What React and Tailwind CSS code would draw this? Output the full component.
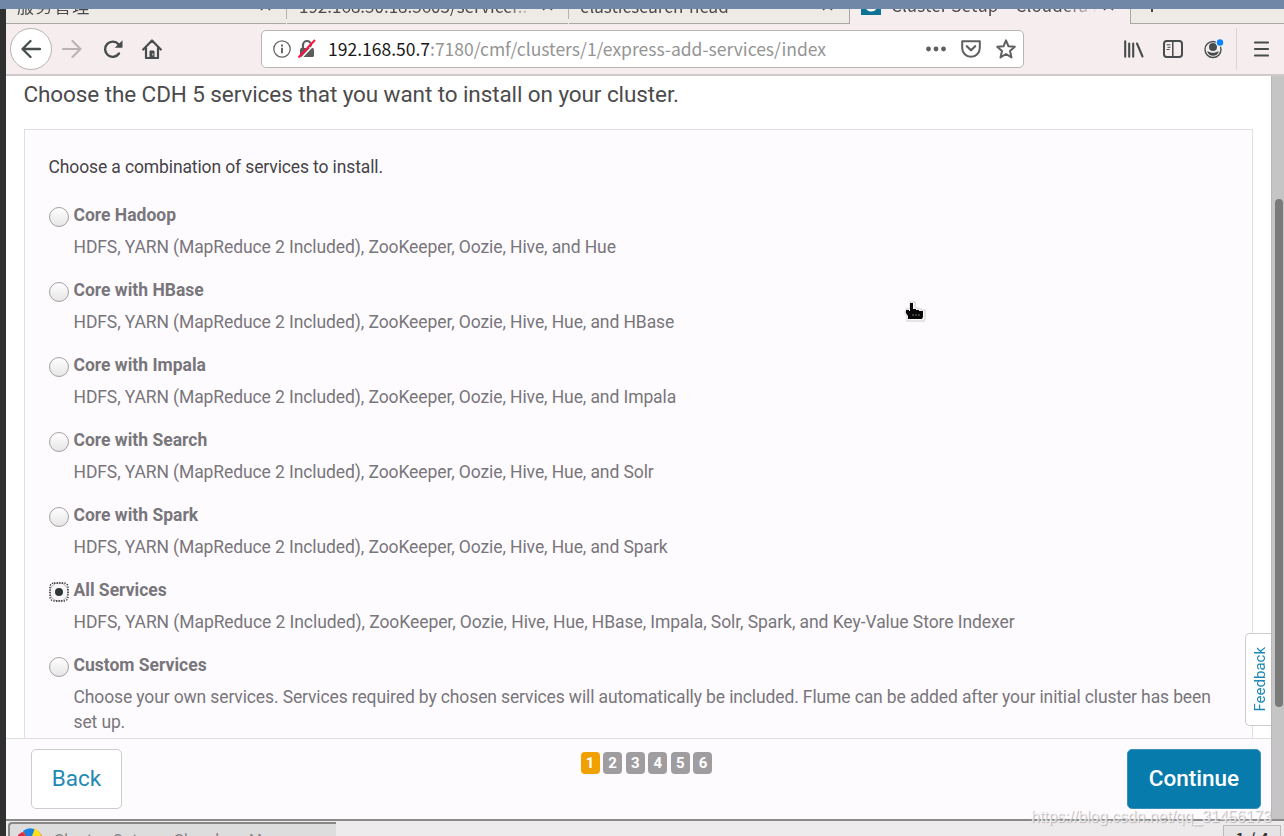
import React from 'react';

const services = [
  { name: 'Core Hadoop', text: 'HDFS, YARN (MapReduce 2 Included), ZooKeeper, Oozie, Hive, and Hue' },
  { name: 'Core with HBase', text: 'HDFS, YARN (MapReduce 2 Included), ZooKeeper, Oozie, Hive, Hue, and HBase' },
  { name: 'Core with Impala', text: 'HDFS, YARN (MapReduce 2 Included), ZooKeeper, Oozie, Hive, Hue, and Impala' },
  { name: 'Core with Search', text: 'HDFS, YARN (MapReduce 2 Included), ZooKeeper, Oozie, Hive, Hue, and Solr' },
  { name: 'Core with Spark', text: 'HDFS, YARN (MapReduce 2 Included), ZooKeeper, Oozie, Hive, Hue, and Spark' },
  {
    name: 'All Services',
    text: 'HDFS, YARN (MapReduce 2 Included), ZooKeeper, Oozie, Hive, Hue, HBase, Impala, Solr, Spark, and Key-Value Store Indexer',
    checked: true,
    tracking: 'tracking-[-0.068px]',
  },
  {
    name: 'Custom Services',
    text: 'Choose your own services. Services required by chosen services will automatically be included. Flume can be added after your initial cluster has been set up.',
    tracking: 'tracking-[-0.125px]',
  },
];

function CloseIcon() {
  return (
    <svg className="w-[11px] h-[11px] shrink-0" viewBox="0 0 11 11" stroke="#555" strokeWidth="1.7">
      <path d="M1 1l9 9M10 1l-9 9" />
    </svg>
  );
}

function Divider() {
  return <div className="w-px h-[10px] self-start shrink-0 bg-[#b5b2af]" />;
}

function Tab({ title, className }) {
  return (
    <div className={`h-full flex items-end bg-[#eeebe6] border-b border-[#a9a6a3] overflow-hidden ${className}`}>
      <span className="flex-1 whitespace-nowrap overflow-hidden leading-[24px] mb-[5px] mask-[linear-gradient(to_right,#000_88%,transparent)]">
        {title}
      </span>
      <div className="mb-[12px] ml-2 h-[11px]">
        <CloseIcon />
      </div>
    </div>
  );
}

function TabStrip() {
  return (
    <div className="flex h-[15px] overflow-hidden text-[17px] text-[#4a4a4a] bg-[#eeebe6]">
      <Tab title="服务管理" className="w-[280px] pl-[11px] pr-[15px] tracking-[1.4px]" />
      <Divider />
      <Tab title="192.168.50.18:5603/servicer.." className="w-[281px] pl-[12px] pr-[15px]" />
      <Divider />
      <Tab title="elasticsearch-head" className="w-[281px] pl-[11px] pr-[16px] border-r" />
      <div className="w-[280px] h-full flex items-end bg-[#f6edee] pl-[11px] pr-[16px]">
        <svg className="w-5 h-5 shrink-0 mb-[9.5px]" viewBox="0 0 20 20">
          <rect width="20" height="20" fill="#0d7394" />
          <path d="M14 6.5a5 5 0 1 0 0 7" fill="none" stroke="#fff" strokeWidth="3.2" />
        </svg>
        <span className="flex-1 ml-[10px] whitespace-nowrap overflow-hidden leading-[24px] mb-[7px] tracking-[0.1px] mask-[linear-gradient(to_right,#000_82%,transparent)]">
          Cluster Setup – Cloudera M
        </span>
        <div className="mb-[13px] ml-1 h-[11px]">
          <CloseIcon />
        </div>
      </div>
      <div className="flex-1 h-full flex items-end border-l border-b border-[#a9a6a3] pl-[13px]">
        <svg className="w-4 h-4 mb-[11px]" viewBox="0 0 16 16" stroke="#444" strokeWidth="2">
          <path d="M8 0v16M0 8h16" />
        </svg>
      </div>
    </div>
  );
}

function Toolbar() {
  return (
    <div className="flex items-center h-[52px] bg-[#f6edee] border-b-2 border-[#cfc9ca]">
      <div className="ml-[4px] w-[42px] h-[42px] rounded-full bg-white border border-[#b9b3b4] flex items-center justify-center shrink-0">
        <svg className="w-5 h-5" viewBox="0 0 20 20" fill="none" stroke="#474d4d" strokeWidth="2.3" strokeLinecap="round" strokeLinejoin="round">
          <path d="M19 10H1.5M9.5 2l-8 8 8 8" />
        </svg>
      </div>
      <svg className="ml-[10px] w-5 h-5" viewBox="0 0 20 20" fill="none" stroke="#b9b3b5" strokeWidth="2.1" strokeLinecap="round" strokeLinejoin="round">
        <path d="M1 10h17.5M10.5 2l8 8-8 8" />
      </svg>
      <svg className="ml-[21px] w-[20px] h-5" viewBox="0 0 20 20" fill="none" stroke="#474d4d" strokeWidth="2.4" strokeLinecap="round">
        <path d="M16 14.500A7.600 7.600 0 1 1 15.500 5.300" />
        <path d="M19.500 1.200v7.600h-7.800z" fill="#474d4d" stroke="none" />
      </svg>
      <svg className="ml-[19px] w-5 h-5" viewBox="0 0 20 20" fill="none" stroke="#474d4d" strokeWidth="2.2" strokeLinejoin="round" strokeLinecap="round">
        <path d="M1.2 10.5L10 1.5l8.8 9M4 9v10h12V9" />
        <path d="M8 19v-7h4v7z" fill="#474d4d" strokeWidth="1" />
        <path d="M10.8 15v1" stroke="#f6edee" strokeWidth="1" />
      </svg>
      <div className="ml-[99px] w-[763px] h-[38px] bg-white rounded-[5px] border border-[#b9b4b5] flex items-center">
        <svg className="ml-[11px] w-[18px] h-[18px]" viewBox="0 0 18 18" fill="none" stroke="#666" strokeWidth="1.3">
          <circle cx="9" cy="9" r="8.2" />
          <path d="M9 7.8v5.4M9 4.4v2" strokeWidth="2" />
        </svg>
        <svg className="ml-[7px] w-[18px] h-5" viewBox="0 0 18 20" fill="none">
          <rect x="2" y="9" width="14" height="9" rx="1.5" fill="#5c5c5c" />
          <path d="M5 10V6a4 4 0 0 1 8 0v4" stroke="#5c5c5c" strokeWidth="2.2" />
          <path d="M2.5 20L18.5 3" stroke="#fff" strokeWidth="1.5" />
          <path d="M0.5 18.5L17 1" stroke="#ff1340" strokeWidth="2" />
        </svg>
        <span className="ml-[12px] flex-1 text-[17.5px] whitespace-nowrap leading-none text-[#949494]">
          <span className="text-[#1a1a1a]">192.168.50.7</span>:7180/cmf/clusters/1/express-add-services/index
        </span>
        <svg className="w-5 h-[6px]" viewBox="0 0 20 6" fill="#5f5f5f">
          <circle cx="2.5" cy="3" r="2.4" />
          <circle cx="10" cy="3" r="2.4" />
          <circle cx="17.5" cy="3" r="2.4" />
        </svg>
        <svg className="ml-[15px] w-5 h-[18px]" viewBox="0 0 20 18" fill="none" stroke="#5f5f5f" strokeWidth="2" strokeLinecap="round" strokeLinejoin="round">
          <path d="M1.2 1.2h17.6V8a8.8 8.8 0 0 1-17.6 0z" />
          <path d="M5.8 6.2L10 10.3l4.2-4.1" strokeWidth="2.3" />
        </svg>
        <svg className="ml-[15px] mr-[7px] w-5 h-5" viewBox="0 0 20 20" fill="none" stroke="#5f5f5f" strokeWidth="2" strokeLinejoin="round">
          <path d="M10 1.4l2.5 5.9 6.3.5-4.8 4.2 1.500 6.400-5.500-3.400-5.500 3.400L6 12 1.200 7.800l6.300-.5z" />
        </svg>
      </div>
      <svg className="ml-[100px] w-5 h-[18px]" viewBox="0 0 20 18" stroke="#474d4d" strokeWidth="2.1" strokeLinecap="round" fill="none">
        <path d="M1.2 1.2v15.6M5.2 3.5v13.3M9.2 3.5v13.3M13 3.5l5.5 13" />
      </svg>
      <svg className="ml-[19px] w-5 h-[18px]" viewBox="0 0 20 18" stroke="#474d4d" strokeWidth="2" fill="none">
        <rect x="1" y="1" width="18" height="16" rx="2.8" />
        <path d="M9.8 1v16" strokeWidth="1.5" />
        <path d="M3.5 4.8h4M4.5 7.3h3M3.5 9.5h3" strokeWidth="1" />
      </svg>
      <svg className="ml-[21px] w-5 h-5" viewBox="0 0 20 20" fill="none">
        <circle cx="9" cy="10.5" r="8" stroke="#474d4d" strokeWidth="1.4" />
        <circle cx="9" cy="8" r="4" fill="#474d4d" />
        <path d="M3.2 12.2c1.6 0 2.4 1.6 5.8 1.6s4.200-1.600 5.800-1.600c-.8 3-3 4.600-5.800 4.600s-5-1.600-5.800-4.600z" fill="#474d4d" />
        <circle cx="16" cy="3.5" r="4.300" fill="#f6edee" />
        <circle cx="16" cy="3.5" r="3.2" fill="#0a84ff" />
      </svg>
      <div className="ml-[12px] w-px h-[42px] bg-[#dcd3d5]" />
      <svg className="ml-[17px] w-[15px] h-4" viewBox="0 0 15 16" stroke="#474d4d" strokeWidth="2.2" strokeLinecap="round">
        <path d="M1 1.5h13M1 8h13M1 14.5h13" />
      </svg>
    </div>
  );
}

function Radio({ checked }) {
  if (checked) {
    return (
      <svg className="mt-[8px] w-5 h-5 shrink-0" viewBox="0 0 20 20">
        <circle cx="10" cy="10" r="9.2" fill="#f7f5f6" stroke="#aaa6a8" />
        <rect x="1" y="1" width="18" height="18" rx="4" fill="none" stroke="#222" strokeWidth="1.3" strokeDasharray="1.3 1.3" />
        <circle cx="10" cy="10" r="4" fill="#2c3837" />
      </svg>
    );
  }
  return (
    <div className="mt-[8px] w-5 h-5 shrink-0 rounded-full border-[1.5px] border-[#a3a09f] bg-linear-to-b from-white via-[#f3f2f2] to-[#e6e6e6]" />
  );
}

function ServiceOption({ service }) {
  return (
    <div className="flex h-[75px]">
      <Radio checked={service.checked} />
      <div className="ml-[5px] text-[17.5px] leading-[25px] text-[#78767a]">
        <div className="font-bold mt-[4px]">{service.name}</div>
        <div className={`mt-[7px] ${service.tracking || 'tracking-[-0.09px]'}`}>{service.text}</div>
      </div>
    </div>
  );
}

function Cursor() {
  return (
    <svg className="absolute left-[898px] top-[224px] w-[22px] h-[24px]" viewBox="0 0 22 24">
      <path d="M6 2h5v6h3v1h3v1h4v8l-1 3H3v-4L1 12l2-3h3z" fill="#fff" stroke="#dedbdf" strokeWidth="1.5" />
      <path d="M6 3h3v6h3v1h3v1h4v6l-1 2H4v-3l-2-3v-3h3v1h1z" fill="#090909" />
      <path d="M8 15h9" stroke="#777" strokeDasharray="2 1" />
    </svg>
  );
}

function Page() {
  return (
    <div className="relative flex flex-1 min-h-0 font-['Roboto',sans-serif]">
      <div className="relative flex flex-col flex-1 bg-white">
        <div className="flex-1 min-h-0 overflow-hidden pl-[17.5px] pr-[18px]">
          <h1 className="text-[22.5px] leading-[36px] tracking-[-0.09px] text-[#4b4b4d]">
            Choose the CDH 5 services that you want to install on your cluster.
          </h1>
          <div className="mt-[17px] h-[700px] bg-[#fefbff] border border-[#e0e0e2] pl-[24px] pr-[36px]">
            <p className="mt-[25px] mb-[7px] text-[17.5px] leading-[25px] tracking-[-0.12px] text-[#454347]">
              Choose a combination of services to install.
            </p>
            <div className="pt-[12px]">
              {services.map((service) => (
                <ServiceOption key={service.name} service={service} />
              ))}
            </div>
          </div>
        </div>
        <div className="relative h-[81px] shrink-0 bg-[#fefbff] border-t border-[#dfdfe1] flex items-start justify-between pl-[25px] pr-[10px]">
          <button className="mt-[10px] w-[91px] h-[60px] rounded-[5px] bg-white border border-[#ccc] text-[22.5px] text-[#1f89b5]">
            Back
          </button>
          <div className="flex gap-[3.6px] mt-[13px] ml-[44px]">
            {[1, 2, 3, 4, 5, 6].map((step) => (
              <span
                key={step}
                className={`w-[19px] h-[22px] rounded-[4px] text-center text-[15px] leading-[22px] font-bold text-white ${
                  step === 1 ? 'bg-[#f0a000]' : 'bg-[#a09da1]'
                }`}
              >
                {step}
              </span>
            ))}
          </div>
          <button className="mt-[10px] w-[134px] h-[60px] rounded-[5px] bg-[#087bad] border border-[#3a8fb8] text-[22.5px] font-medium text-white">
            Continue
          </button>
        </div>
        <div className="absolute right-0 top-[557px] w-[26px] h-[93px] rounded-l-[5px] bg-white border border-r-0 border-[#ccc] flex items-center justify-center pl-[3px]">
          <span className="[writing-mode:vertical-rl] rotate-180 text-[15px] leading-none text-[#1f89b5]">Feedback</span>
        </div>
        <Cursor />
      </div>
      <div className="w-[13px] bg-[#c5c5c5] border-l border-[#b8b8b8]">
        <div className="mt-[123px] ml-[3px] w-[8px] h-[508px] rounded-full bg-[#7a7a79]" />
      </div>
    </div>
  );
}

function Taskbar() {
  return (
    <div className="flex h-[17px] shrink-0 overflow-hidden bg-[#edebeb] border-t-2 border-[#8a8a88] text-[17px] text-[#8a8888]">
      <div className="ml-[2px] mt-[1px] w-[328px] h-[30px] bg-[#dedddd] border-t-2 border-l-2 border-[#888886] rounded-tl-[4px] flex items-start">
        <svg className="ml-[8px] mt-[4px] w-[26px] h-[26px] shrink-0" viewBox="0 0 26 26">
          <circle cx="13" cy="13" r="12" fill="#f04a24" />
          <path d="M5 3a12 12 0 0 1 13-1l-2 12-7-5z" fill="#1d7fe0" />
          <path d="M0 7l4-3 3 4v10H1z" fill="#e12a4a" />
          <path d="M17 0l5 5 4 9-9 5-4-8z" fill="#ffdf16" />
        </svg>
        <span className="ml-[9px] mt-[4px] leading-[24px] whitespace-nowrap">Cluster Setup - Cloudera Man…</span>
      </div>
      <div className="ml-auto mr-[3px] mt-[4px] w-[58px] h-[30px] bg-[#e6e3e4] border border-[#bdbaba] text-center leading-[26px] text-[#333] font-medium">
        1 / 4
      </div>
    </div>
  );
}

export default function App() {
  return (
    <div className="relative flex flex-col w-[1284px] h-[836px] overflow-hidden font-['Noto_Sans_CJK_SC',sans-serif]">
      <div className="h-[9px] shrink-0 bg-[#7187a8]" />
      <div className="flex flex-1 min-h-0">
        <div className="w-[6px] shrink-0 bg-[#303030]" />
        <div className="flex flex-col flex-1 min-w-0">
          <TabStrip />
          <Toolbar />
          <Page />
          <Taskbar />
        </div>
      </div>
      <div className="absolute left-[1031px] top-[807px] text-[15.7px] leading-[20px] whitespace-nowrap text-white/70 font-['Liberation_Sans',sans-serif] [text-shadow:1px_1px_1px_#b5b2b5]">
        https://blog.csdn.net/qq_31456173
      </div>
    </div>
  );
}
